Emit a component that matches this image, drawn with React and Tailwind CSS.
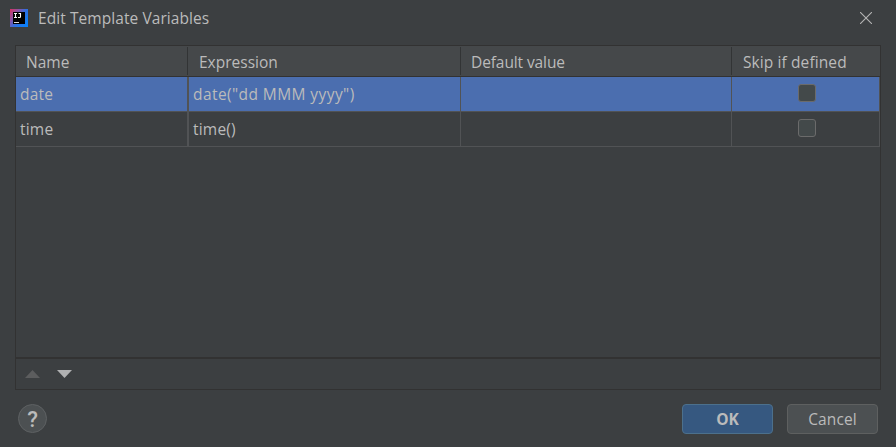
import React from "react";

function AppLogo() {
  return (
    <svg className="block h-[18px] w-[18px]" viewBox="0 0 18 18">
      <defs>
        <linearGradient id="logo" x1="0" y1="0" x2="1" y2="0.75">
          <stop offset="0" stopColor="#d8325f" />
          <stop offset="0.3" stopColor="#94509f" />
          <stop offset="0.6" stopColor="#2f6fe0" />
          <stop offset="1" stopColor="#0a80fa" />
        </linearGradient>
      </defs>
      <rect width="18" height="18" fill="url(#logo)" />
      <rect x="3" y="3" width="12" height="12" fill="#000" />
      <path d="M4 4.5h3M5.5 4.5v4M4 8.5h3M8.5 4.5h2M10.5 4v3.7q0 .8-.8.8H8" fill="none" stroke="#fff" strokeWidth="1.1" />
      <path d="M4 13.5h5" stroke="#ddd" strokeWidth="1" />
    </svg>
  );
}

function Checkbox() {
  return <div className="mt-[7px] h-[18px] w-[18px] rounded-[3px] border border-[#6b6b6b] bg-[#43494a]" />;
}

const GRID = "grid grid-cols-[172px_273px_271px_148px]";

function Row({ name, expression, selected }) {
  const bg = selected ? "bg-[#4b6eaf]" : "bg-[#3c3f41]";
  return (
    <div className={`${GRID} h-[35px] border-b border-[#515355] leading-[34px] ${bg}`}>
      <div className="border-r border-[#515355] pl-[4px] tracking-[0.2px]">{name}</div>
      <div className={`border-x border-[#515355] pl-[4px] ${selected ? "tracking-[0.42px]" : "tracking-[0.2px]"}`}>{expression}</div>
      <div className="border-r border-[#515355]" />
      <div className="flex items-start border-r border-[#515355] pl-[65.5px]">
        <Checkbox />
      </div>
    </div>
  );
}

export default function App() {
  return (
    <div className="flex h-[447px] w-[896px] flex-col bg-[#3c3f41] font-['Open_Sans','Noto_Sans',sans-serif] text-[15.5px] whitespace-nowrap text-[#bbbbbb]">
      <header className="flex h-[45px] shrink-0 items-start pl-[10px]">
        <div className="pt-[9px]"><AppLogo /></div>
        <h1 className="ml-[10px] pt-[8px] leading-[20px] tracking-[0.07px]">Edit Template Variables</h1>
        <svg className="mt-[12px] mr-[24px] ml-auto h-[12px] w-[12px]" viewBox="0 0 12 12">
          <path d="M0 0L12 12M12 0L0 12" stroke="#b4b4b4" strokeWidth="1.1" />
        </svg>
      </header>

      <main className="mx-[15px] flex h-[345px] flex-col border border-[#323232]">
        <div className={`${GRID} h-[31px] shrink-0 border-b border-[#323232] bg-[#45484a] leading-[20px]`}>
          <div className="my-px border-r border-[#323435] pt-[5px] pl-[10px]">Name</div>
          <div className="my-px border-r border-[#323435] pt-[5px] pl-[11px]">Expression</div>
          <div className="my-px border-r border-[#323435] pt-[5px] pl-[10px] tracking-[-0.1px]">Default value</div>
          <div className="my-px pt-[5px] pl-[11px] tracking-[0.1px]">Skip if defined</div>
        </div>
        <Row name="date" expression={'date("dd MMM yyyy")'} selected />
        <Row name="time" expression="time()" />
        <div className="flex-1" />
        <div className="flex h-[32px] items-start gap-[17px] border-t-2 border-[#323232] pt-[11px] pl-[9px]">
          <svg className="h-[8px] w-[15px]" viewBox="0 0 15 8"><path d="M0 8L7.5 0L15 8Z" fill="#5c5d5e" /></svg>
          <svg className="h-[8px] w-[15px]" viewBox="0 0 15 8"><path d="M0 0H15L7.5 8Z" fill="#b0b1b2" /></svg>
        </div>
      </main>

      <footer className="flex items-start pt-[14px] pr-[18px] pl-[18px]">
        <button className="flex h-[29px] w-[29px] items-center justify-center rounded-full border border-[#5e6163] bg-[#4c5052] pt-[2px] font-['Roboto',sans-serif] text-[22px] leading-none font-medium">?</button>
        <div className="ml-auto flex gap-[14px]">
          <button className="h-[30px] w-[91px] rounded-[4px] border border-[#4c708c] bg-[#365880] leading-[29px] font-bold">OK</button>
          <button className="h-[30px] w-[91px] rounded-[4px] border border-[#5e6060] bg-[#4c5052] leading-[29px] tracking-[0.1px]">Cancel</button>
        </div>
      </footer>
    </div>
  );
}
